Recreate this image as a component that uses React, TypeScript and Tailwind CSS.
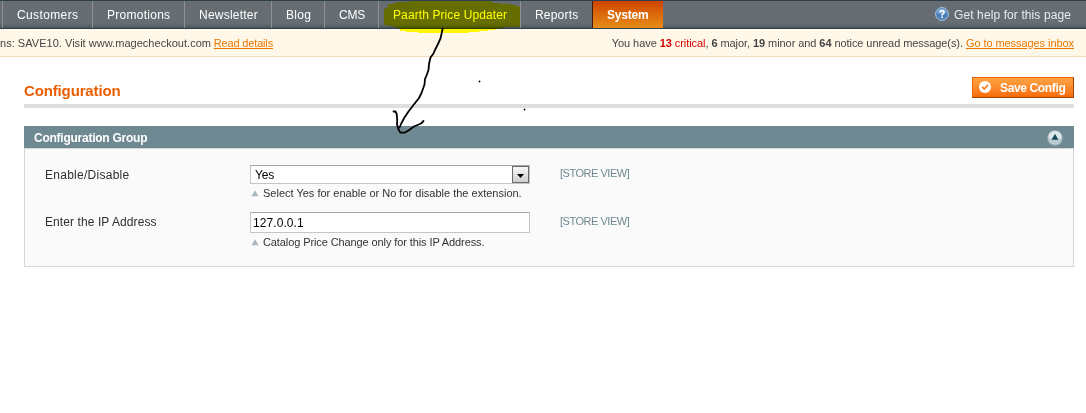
import React from 'react';

const arial = "font-['Liberation_Sans',Arial,sans-serif]";

function NavItem({ label, className }: { label: string; className: string }) {
  return (
    <li className={`flex h-[27px] shrink-0 border-l border-[#8c9194] pl-[14px] text-[12px] leading-[28px] text-white ${className}`}>
      {label}
    </li>
  );
}

function Triangle() {
  return (
    <svg className="mr-[4px] shrink-0" width="8" height="7" viewBox="0 0 8 7">
      <path d="M4 0.300 L7.500 6.300 H0.500 Z" fill="#a9b8bd" />
    </svg>
  );
}

function Note({ text, className }: { text: string; className: string }) {
  return (
    <p className={`flex h-[14px] items-center pl-[1px] text-[11px] leading-[14px] text-[#333] ${className}`}>
      <Triangle />
      <span className="whitespace-nowrap">{text}</span>
    </p>
  );
}

function Annotations() {
  return (
    <svg className="pointer-events-none absolute left-0 top-0 mix-blend-multiply" width="1086" height="150" viewBox="0 0 1086 150">
      <path
        d="M388 4 L397 3 V2 L420 1 H492 L493 3 L508 4 L518 6 L520 8 V27 H508 L492 30 L475 32 L462 33 L425 33 L411 32 L400 31 V29 L391 26 L384 25 V9 L388 7 Z"
        fill="#ffff00"
        shapeRendering="crispEdges"
      />
      <g fill="none" stroke="#000" strokeWidth="1.8" strokeLinecap="round" strokeLinejoin="round">
        <path d="M442.700 28.500 L441.500 34 L440.500 38.500 L437.500 45 L435 50 L433.500 53.500 L430.500 57.500 L429 64 L428.500 70 L426.500 75.500 L425 79 L424.500 84.500 L421.500 93 L419 98 L413.500 105 L408.500 111.500 L404.500 117.500 L401.500 123 L399.500 127.500" />
        <path d="M393.500 111.500 H395.500 L396.700 114 L397.200 120 L397 124.500 L398.500 129.500 L400.500 132.700 H404.500 L408.500 130.500 L414 126.500 L421 123.500 L423.500 121" />
      </g>
      <circle cx="479.500" cy="81.500" r="0.900" />
      <circle cx="524.500" cy="109.500" r="0.900" />
    </svg>
  );
}

export default function App() {
  return (
    <div className={`relative isolate flex h-[413px] w-[1086px] flex-col overflow-hidden bg-white ${arial}`}>
      <header className="flex h-[29px] shrink-0 justify-between border-y border-[#2e3f4c] bg-[linear-gradient(#666d72_0px,#676e73_22px,#5b6469_25px,#465057_27px)]">
        <ul className="flex pl-[2px]">
          <NavItem label="Customers" className="w-[90px] tracking-[0.38px]" />
          <NavItem label="Promotions" className="w-[92px] tracking-[0.27px]" />
          <NavItem label="Newsletter" className="w-[87px] tracking-[0.22px]" />
          <NavItem label="Blog" className="w-[53px] tracking-[0.3px]" />
          <NavItem label="CMS" className="w-[54px] tracking-[-0.2px]" />
          <NavItem label="Paarth Price Updater" className="w-[142px] tracking-[0.1px]" />
          <NavItem label="Reports" className="w-[72px] tracking-[0.2px]" />
          <li className="h-[27px] w-[71px] border-l border-[#41190b] bg-linear-to-b from-[#ce4300] to-[#e88c18] pl-[14px] text-[12px] font-bold leading-[28px] tracking-[-0.2px] text-white">
            System
          </li>
        </ul>
        <a className="flex items-center pr-[15px] text-[12px] leading-[28px] tracking-[0.1px] text-[#e4edf5]">
          <svg className="mr-[5px] -mt-[2px]" width="14" height="14" viewBox="0 0 14 14">
            <circle cx="7" cy="7" r="6.400" fill="#4c81b8" stroke="#a9c8e8" strokeWidth="1" />
            <path d="M2 5.500 a5.200 5.200 0 0 1 10 0 Q7 8 2 5.500" fill="#7ca7d3" />
            <path d="M5 5.300 Q5.200 3.600 7 3.600 Q9 3.700 9 5.300 Q9 6.300 7.900 6.900 Q7 7.400 7 8.400" fill="none" stroke="#fff" strokeWidth="1.600" />
            <path d="M6.200 9.500 h1.700 v1.600 h-1.700z" fill="#fff" />
          </svg>
          Get help for this page
        </a>
      </header>

      <div className="flex h-[28px] shrink-0 justify-between whitespace-nowrap border-b border-[#eddcb5] bg-[#fff8e9] pr-[12px] text-[11px] leading-[28px] text-[#444]">
        <div className="flex w-[273px] justify-between">
          <span className="tracking-[0.03px]">ns: SAVE10. Visit www.magecheckout.com</span>
          <a className="tracking-[-0.16px] text-[#ea7601] underline">Read details</a>
        </div>
        <div className="tracking-[-0.07px]">
          You have <span className="text-[#d50000]"><b>13</b> critical</span>, <b>6</b> major, <b>19</b> minor and <b>64</b> notice unread message(s).{' '}
          <a className="text-[#ea7601] underline">Go to messages inbox</a>
        </div>
      </div>

      <main className="flex flex-col pl-[24px] pr-[12px] pt-[20px]">
        <div className="flex h-[31px] items-start justify-between border-b-4 border-[#dfdfdf]">
          <h1 className="pt-[5px] text-[15px] font-bold leading-[18px] tracking-[-0.14px] text-[#eb5e00]">Configuration</h1>
          <button className="flex h-[21px] w-[102px] items-center border border-b-[#a04300] border-l-[#ed6502] border-r-[#a04300] border-t-[#ed6502] bg-linear-to-b from-[#ffa442] to-[#f76c06] pl-[6px] text-[12px] font-bold tracking-[-0.36px] text-white">
            <svg className="mr-[9px] shrink-0 -mt-[1px]" width="12" height="12" viewBox="0 0 12 12">
              <circle cx="6" cy="6" r="6" fill="#fff" />
              <path d="M3.200 5.800 L5.300 8 L9 3.800" fill="none" stroke="#f47f20" strokeWidth="1.800" />
            </svg>
            <span className="whitespace-nowrap">Save Config</span>
          </button>
        </div>

        <section className="mt-[18px]">
          <div className="flex h-[22px] items-center justify-between bg-[#6f8992] pl-[10px] pr-[11px]">
            <h2 className="pt-[2px] text-[12px] font-bold leading-[20px] tracking-[-0.25px] text-white">Configuration Group</h2>
            <svg className="mt-[1px]" width="16" height="16" viewBox="0 0 16 16">
              <circle cx="8" cy="8" r="7.700" fill="#a4b6bc" />
              <circle cx="8" cy="7.500" r="6.600" fill="#dce8eb" />
              <path d="M1.600 8.500 a6.400 5.600 0 0 0 12.800 0z" fill="#b9ccd1" />
              <path d="M8 3.800 L11.400 9.800 H4.600 Z" fill="#17475a" />
            </svg>
          </div>
          <div className="flex h-[119px] flex-col border border-[#d6d6d6] bg-[#fafafa] pl-[20px] pt-[16px]">
            <div className="flex h-[47px] items-start">
              <label className="w-[205px] text-[12px] leading-[20px] tracking-[0.27px] text-[#2f2f2f]">Enable/Disable</label>
              <div className="w-[310px]">
                <div className="flex h-[19px] w-[280px] items-stretch justify-between border border-[#c5c5c5] border-t-[#a5a5a5] bg-white pl-[4px] text-[12px] leading-[18px] text-black">
                  <span className="tracking-[-0.2px]">Yes</span>
                  <span className="flex w-[17px] items-center justify-center border border-[#696969] bg-linear-to-b from-[#f7f7f7] to-[#cfcfcf]">
                    <svg width="7" height="4" viewBox="0 0 7 4" className="mt-[2px]">
                      <path d="M0 0 H7 L3.500 4 Z" />
                    </svg>
                  </span>
                </div>
                <Note text="Select Yes for enable or No for disable the extension." className="mt-[2px]" />
              </div>
              <span className="text-[11px] leading-[17px] tracking-[-0.48px] text-[#6f8992]">[STORE VIEW]</span>
            </div>
            <div className="flex items-start">
              <label className="w-[205px] text-[12px] leading-[20px] tracking-[0.09px] text-[#2f2f2f]">Enter the IP Address</label>
              <div className="w-[310px]">
                <div className="h-[21px] w-[280px] border border-[#c5c5c5] border-t-[#a5a5a5] bg-white pl-[2px] text-[12px] leading-[20px] tracking-[0.07px] text-black">
                  127.0.0.1
                </div>
                <Note text="Catalog Price Change only for this IP Address." className="mt-[2px] tracking-[-0.1px]" />
              </div>
              <span className="text-[11px] leading-[18px] tracking-[-0.48px] text-[#6f8992]">[STORE VIEW]</span>
            </div>
          </div>
        </section>
      </main>
      <Annotations />
    </div>
  );
}
